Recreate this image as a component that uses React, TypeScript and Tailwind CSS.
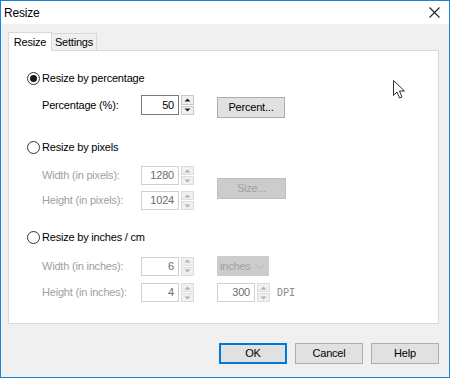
import React from 'react';

const font = { fontFamily: '"Liberation Sans", Arial, sans-serif' };

function Tri({ up, color }: { up?: boolean; color: string }) {
  return (
    <svg width="7" height="4" viewBox="0 0 7 4">
      <path d={up ? 'M0.5 3.5 L3.5 0.5 L6.5 3.5 Z' : 'M0.5 0.5 L3.5 3.5 L6.5 0.5 Z'} fill={color} />
    </svg>
  );
}

function Spin({ disabled, h = 19 }: { disabled?: boolean; h?: number }) {
  const color = disabled ? '#b0b0b0' : '#202020';
  const border = disabled ? 'border-[#dcdcdc]' : 'border-[#c8c8c8]';
  return (
    <div className="ml-[2px] flex w-[13px] flex-col gap-px" style={{ height: h }}>
      <div className={`flex flex-1 items-center justify-center border bg-[#f0f0f0] ${border}`}>
        <Tri up color={color} />
      </div>
      <div className={`flex flex-1 items-center justify-center border bg-[#f0f0f0] ${border}`}>
        <Tri color={color} />
      </div>
    </div>
  );
}

function NumBox({ value, disabled, w = 38, h = 19 }: { value: string; disabled?: boolean; w?: number; h?: number }) {
  return (
    <div className="flex items-center">
      <div
        className={`flex items-center justify-end border bg-white pr-[4px] text-[11px] ${
          disabled ? 'border-[#d0d0d0] text-[#6d6d6d]' : 'border-[#7a7a7a] text-black'
        }`}
        style={{ width: w, height: h }}
      >
        {value}
      </div>
      <Spin disabled={disabled} h={h} />
    </div>
  );
}

function Radio({ checked, label }: { checked?: boolean; label: string }) {
  return (
    <div className="flex h-[16px] items-center">
      <div className="flex h-[13px] w-[13px] items-center justify-center rounded-full border border-[#333333] bg-white">
        {checked && <div className="h-[7px] w-[7px] rounded-full bg-[#1a1a1a]" />}
      </div>
      <span className="ml-[2px] text-[11px] text-black">{label}</span>
    </div>
  );
}

function Row({ label, disabled, children }: { label: string; disabled?: boolean; children: React.ReactNode }) {
  return (
    <div className="flex items-center">
      <span className={`w-[99px] text-[11px] ${disabled ? 'text-[#a0a0a0]' : 'text-black'}`}>{label}</span>
      {children}
    </div>
  );
}

function Btn({ label, primary }: { label: string; primary?: boolean }) {
  return (
    <div
      className={`flex h-[21px] w-[68px] items-center justify-center bg-[#e1e1e1] text-[11px] text-black ${
        primary ? 'border-2 border-[#0078d7]' : 'border border-[#adadad]'
      }`}
    >
      {label}
    </div>
  );
}

export default function App() {
  return (
    <div
      className="relative flex h-[378px] w-[450px] flex-col border border-[#1883d7] bg-[#f0f0f0] tracking-[-0.2px]"
      style={font}
    >
      {/* title bar */}
      <div className="flex h-[23px] items-center justify-between bg-white pl-[3px] pr-[9px]">
        <span className="text-[12px] text-black">Resize</span>
        <svg width="11" height="11" viewBox="0 0 11 11">
          <path d="M0.5 0.5 L10.5 10.5 M10.5 0.5 L0.5 10.5" stroke="#222" strokeWidth="1.1" />
        </svg>
      </div>

      {/* tabs */}
      <div className="flex items-end pl-[7px] pt-[8px]">
        <div className="z-10 -mb-px flex h-[19px] w-[44px] items-center justify-center border border-b-0 border-[#d9d9d9] bg-white text-[11px] text-black">
          Resize
        </div>
        <div className="flex h-[17px] w-[45px] items-center justify-center border border-l-0 border-b-0 border-[#d9d9d9] bg-[#f0f0f0] text-[11px] text-black">
          Settings
        </div>
      </div>

      {/* panel */}
      <div className="ml-[7px] mr-[10px] flex h-[274px] flex-col border border-[#d9d9d9] bg-white pl-[18px]">
        <div className="mt-[19px]">
          <Radio checked label="Resize by percentage" />
        </div>
        <div className="mt-[9px] flex items-start pl-[15px]">
          <div className="flex h-[20px] items-center">
            <span className="w-[99px] text-[11px] text-black">Percentage (%):</span>
            <NumBox value="50" h={20} />
          </div>
          <div className="ml-[23px] mt-[2px]">
            <Btn label="Percent..." />
          </div>
        </div>

        <div className="mt-[21px]">
          <Radio label="Resize by pixels" />
        </div>
        <div className="mt-[11px] flex items-center pl-[15px]">
          <div className="flex flex-col gap-[6px]">
            <Row label="Width (in pixels):" disabled>
              <NumBox value="1280" disabled />
            </Row>
            <Row label="Height (in pixels):" disabled>
              <NumBox value="1024" disabled />
            </Row>
          </div>
          <div className="ml-[23px] flex h-[21px] w-[69px] items-center justify-center border border-[#bfbfbf] bg-[#cccccc] text-[11px] text-[#a0a0a0]">
            Size...
          </div>
        </div>

        <div className="mt-[19px]">
          <Radio label="Resize by inches / cm" />
        </div>
        <div className="mt-[11px] flex flex-col gap-[7px] pl-[15px]">
          <Row label="Width (in inches):" disabled>
            <NumBox value="6" disabled />
            <div className="ml-[23px] flex h-[20px] w-[52px] items-center justify-between bg-[#cccccc] pl-[3px] pr-[5px] text-[11px] text-[#a0a0a0]">
              <span>inches</span>
              <svg width="9" height="5" viewBox="0 0 9 5">
                <path d="M0.5 0.5 L4.5 4.5 L8.5 0.5" stroke="#b5b5b5" fill="none" />
              </svg>
            </div>
          </Row>
          <Row label="Height (in inches):" disabled>
            <NumBox value="4" disabled />
            <div className="ml-[23px]">
              <NumBox value="300" disabled />
            </div>
            <span className="ml-[7px] text-[10px] tracking-normal text-[#8a8a8a]" style={{ fontFamily: '"DejaVu Sans Mono", monospace' }}>
              DPI
            </span>
          </Row>
        </div>
      </div>

      {/* buttons */}
      <div className="mt-[19px] flex justify-end gap-[8px] pr-[10px]">
        <Btn label="OK" primary />
        <Btn label="Cancel" />
        <Btn label="Help" />
      </div>

      {/* mouse cursor */}
      <svg className="absolute left-[392px] top-[79px]" width="13" height="19" viewBox="0 0 13 19">
        <path
          d="M0.5 0.5 L0.5 15.5 L4 12 L6.5 18 L9 17 L6.5 11 L11.5 11 Z"
          fill="white"
          stroke="#333"
          strokeWidth="1"
          strokeLinejoin="round"
        />
      </svg>
    </div>
  );
}
